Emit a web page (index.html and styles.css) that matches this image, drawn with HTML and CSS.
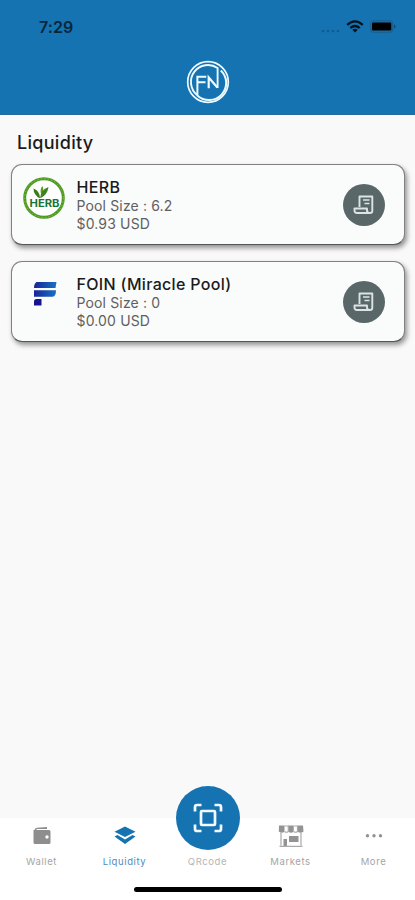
FILE: index.html
```html
<!DOCTYPE html>
<html lang="en">
<head>
<meta charset="utf-8">
<title>Liquidity</title>
<link rel="stylesheet" href="styles.css">
</head>
<body>
<div class="app">
  <header class="header">
    <div class="status">
      <span class="time">7:29</span>
      <div class="indicators">
        <svg class="signal" width="20" height="4" viewBox="0 0 20 4"><g fill="#0b4f7d" opacity=".65"><circle cx="2" cy="2" r="1.3"/><circle cx="7" cy="2" r="1.3"/><circle cx="12" cy="2" r="1.3"/><circle cx="17" cy="2" r="1.3"/></g></svg>
        <svg class="wifi" width="18" height="13" viewBox="0 0 18 13"><g fill="none" stroke="#04121c" stroke-width="2.3"><path d="M1.2 4.9Q9-2.1 16.8 4.9"/><path d="M4.3 8Q9 3.9 13.7 8"/></g><path d="M6.3 9.7Q9 7.6 11.7 9.7L9 12.6z" fill="#04121c"/></svg>
        <svg class="battery" width="27" height="13" viewBox="0 0 27 13"><rect x=".7" y=".7" width="22" height="11.6" rx="3" fill="none" stroke="#1a5e8f" stroke-width="1.1"/><rect x="2" y="2.4" width="19.3" height="8.2" rx="1.3" fill="#000"/><path d="M24 4.4q3 2.1 0 4.2z" fill="#0b466f"/></svg>
      </div>
    </div>
    <svg class="logo" width="44" height="44" viewBox="0 0 44 44">
      <g fill="none" stroke="#eefaff">
        <circle cx="22" cy="22" r="20.3" stroke-width="1.7"/>
        <path d="M11 35A17 17 0 0 1 31.6 8V28" stroke-width="1.9"/>
        <path d="M34.8 10.4A17 17 0 0 1 11.4 35.4V16.8H20.3M11.4 22.300H19.500" stroke-width="2"/>
        <path d="M22.7 28.300V17.500L31.400 27.500" stroke-width="2.200"/>
      </g>
    </svg>
  </header>

  <main class="content">
    <h1 class="title">Liquidity</h1>
    <section class="card">
      <svg class="token" width="42" height="42" viewBox="0 0 42 42">
        <circle cx="21" cy="21" r="19.3" fill="#fff" stroke="#4d9b22" stroke-width="3"/>
        <circle cx="21" cy="21" r="19.4" fill="none" stroke="#86bd4a" stroke-width="1" stroke-dasharray="1.5 2"/>
        <path d="M17 21.500Q10.500 18 10.500 11.500Q17 14 17 21.500z" fill="#377d18"/>
        <path d="M18.200 17.500Q16.500 13 19.300 9Q22 13.500 18.200 17.500z" fill="#5c9a1c"/>
        <path d="M17 21.500Q17.500 12.500 25.500 10Q24.500 18 17 21.500z" fill="#3d8420"/>
        <text class="herb" x="21.500" y="30" text-anchor="middle" textLength="30" lengthAdjust="spacingAndGlyphs">HERB</text>
      </svg>
      <div class="info">
        <h2 class="name name-herb">HERB</h2>
        <p class="pool">Pool Size : 6.2</p>
        <p class="value">$0.93 USD</p>
      </div>
      <div class="history"><svg width="22" height="20" viewBox="0 0 22 20"><g fill="none" stroke="#dce4e6" stroke-width="1.9" stroke-linejoin="round"><path d="M6.500 12V1.500H19.300V16Q19.300 18 17 18H4Q1.500 18 1.500 15.500V13.500H14V16Q14.500 18 17 18"/><path d="M10 5H16.500M11.500 8.500H16.500" stroke-width="1.500"/></g></svg></div>
    </section>
    <section class="card">
      <svg class="token" width="42" height="42" viewBox="0 0 42 42">
        <defs><linearGradient id="foin" x1="0" y1="0" x2="1" y2="0"><stop offset="0" stop-color="#16249a"/><stop offset="1" stop-color="#1872c4"/></linearGradient></defs>
        <path d="M13.500 8H33.500L32.500 14H11Q11 9.500 13.500 8z" fill="url(#foin)"/>
        <path d="M11 16.300H33Q33 22.800 29.500 22.800H11z" fill="url(#foin)"/>
        <path d="M11 31.500V27.500Q11 25 13.500 25H18.500V31.500z" fill="#14148e"/>
      </svg>
      <div class="info">
        <h2 class="name">FOIN (Miracle Pool)</h2>
        <p class="pool">Pool Size : 0</p>
        <p class="value">$0.00 USD</p>
      </div>
      <div class="history"><svg width="22" height="20" viewBox="0 0 22 20"><g fill="none" stroke="#dce4e6" stroke-width="1.9" stroke-linejoin="round"><path d="M6.500 12V1.500H19.300V16Q19.300 18 17 18H4Q1.500 18 1.500 15.500V13.500H14V16Q14.500 18 17 18"/><path d="M10 5H16.500M11.500 8.500H16.500" stroke-width="1.500"/></g></svg></div>
    </section>
  </main>

  <footer class="footer">
    <nav class="tabs">
      <a class="tab">
        <svg width="26" height="26" viewBox="0 0 26 26"><path d="M5.500 7Q5.500 5 8 4.700L18 4V6H7.500V7H20Q21.500 7 21.500 8.500V19.500Q21.500 21 20 21H6Q4.500 21 4.500 19.500V7z" fill="#8e8e8e"/><circle cx="18" cy="14" r="1.700" fill="#fff"/></svg>
        <span>Wallet</span>
      </a>
      <a class="tab active">
        <svg width="26" height="26" viewBox="0 0 26 26"><path d="M13 3.500L23.500 8.700 13 14 2.500 8.700z" fill="#1573b1"/><path d="M2.500 13.500L5.500 12 13 16.500 20.500 12 23.500 13.500 13 21z" fill="#1573b1"/></svg>
        <span>Liquidity</span>
      </a>
      <a class="tab">
        <svg width="26" height="26" viewBox="0 0 26 26"></svg>
        <span class="faint">QRcode</span>
      </a>
      <a class="tab">
        <svg width="26" height="26" viewBox="0 0 26 26"><g fill="#939393"><path d="M1 2.500H6.500V8.500Q3.700 11 .800 8.500zM10.300 2.500H15.700V8.500Q13 11 10.300 8.500zM19.500 2.500H25L25.500 8.500Q22.500 11 19.500 8.500z"/><path d="M11 13H20.500V19H11zM5.500 16H9V23H5.500z"/></g><path d="M6.500 3H10.300V8.500Q8.500 10 6.500 8.500M15.700 3H19.500V8.500Q17.500 10 15.700 8.500M3 10V22.500M23 10V22.500M1.500 23.300H24.500" fill="none" stroke="#aaa" stroke-width="1.200"/></svg>
        <span>Markets</span>
      </a>
      <a class="tab">
        <svg width="26" height="26" viewBox="0 0 26 26"><g fill="#929292"><circle cx="6.500" cy="12.700" r="1.700"/><circle cx="13" cy="12.700" r="1.700"/><circle cx="19.500" cy="12.700" r="1.700"/></g></svg>
        <span>More</span>
      </a>
    </nav>
    <div class="scan"><svg width="30" height="30" viewBox="0 0 30 30"><g fill="none" stroke="#f2faff" stroke-width="2.700" stroke-linejoin="round"><rect x="8" y="8" width="14" height="14" rx="1"/><path d="M2 8.500V4Q2 2 4 2H8.500M21.500 2H26Q28 2 28 4V8.500M28 21.500V26Q28 28 26 28H21.500M8.500 28H4Q2 28 2 26V21.500"/></g></svg></div>
    <div class="home"></div>
  </footer>
</div>
</body>
</html>
```
FILE: styles.css
```css
* { box-sizing: border-box; }
body, h1, h2, p { margin: 0; }
body { background: #f9f9f9; font-family: Inter, sans-serif; color: #1b1b1b; }
svg { display: block; flex: none; }
.app { width: 415px; height: 900px; display: flex; flex-direction: column; overflow: hidden; }

.header { height: 115px; background: #1573b1; border-bottom: 1px solid #26699a; display: flex; flex-direction: column; align-items: center; }
.status { width: 100%; height: 60px; padding: 17px 18px 0 39px; display: flex; justify-content: space-between; align-items: flex-start; }
.time { font-size: 16px; font-weight: 600; line-height: 20px; color: #06263c; letter-spacing: .1px; }
.indicators { display: flex; align-items: center; padding-top: 3px; }
.signal { margin: 8px 5px 0 0; }
.wifi { margin-right: 6px; }

.content { flex: 1; padding: 16px 10px 0 11px; }
.title { margin: 0 0 10px 6px; font-size: 18px; line-height: 23px; font-weight: 500; letter-spacing: .3px; }
.card { height: 81px; margin-bottom: 16px; padding: 12px 19px 0 11px; display: flex; align-items: flex-start; background: #fafbfb; border: 1px solid #818181; border-bottom-color: #555; border-radius: 11px; box-shadow: 2px 3px 5px rgba(0, 0, 0, .42); }
.token { margin-right: 11.5px; }
.herb { font: 700 10.500px Inter, sans-serif; fill: #16743b; stroke: #fff; stroke-width: 1.500px; paint-order: stroke; }
.info { flex: 1; }
.name { font-size: 16px; line-height: 20px; font-weight: 500; white-space: nowrap; letter-spacing: .33px; }
.pool, .value { font-size: 14px; line-height: 18px; font-weight: 400; color: #606060; letter-spacing: .15px; }
.history { width: 42px; height: 42px; margin-top: 7px; border-radius: 50%; background: #596769; display: flex; align-items: center; justify-content: center; }

.footer { height: 82px; background: #fff; position: relative; }
.tabs { display: grid; grid-template-columns: repeat(5, 1fr); padding-top: 5px; }
.tab { display: flex; flex-direction: column; align-items: center; gap: 6px; font-size: 9.5px; line-height: 14px; color: #a5a5a5; letter-spacing: .6px; }
.active { color: #5389bb; }
.faint { color: #b5b5b5; }
.scan { position: absolute; left: 176px; top: -32px; width: 64px; height: 64px; border-radius: 50%; background: #1573b1; display: flex; align-items: center; justify-content: center; }
.home { position: absolute; left: 134px; top: 69px; width: 148px; height: 5px; border-radius: 3px; background: #000; }
```
